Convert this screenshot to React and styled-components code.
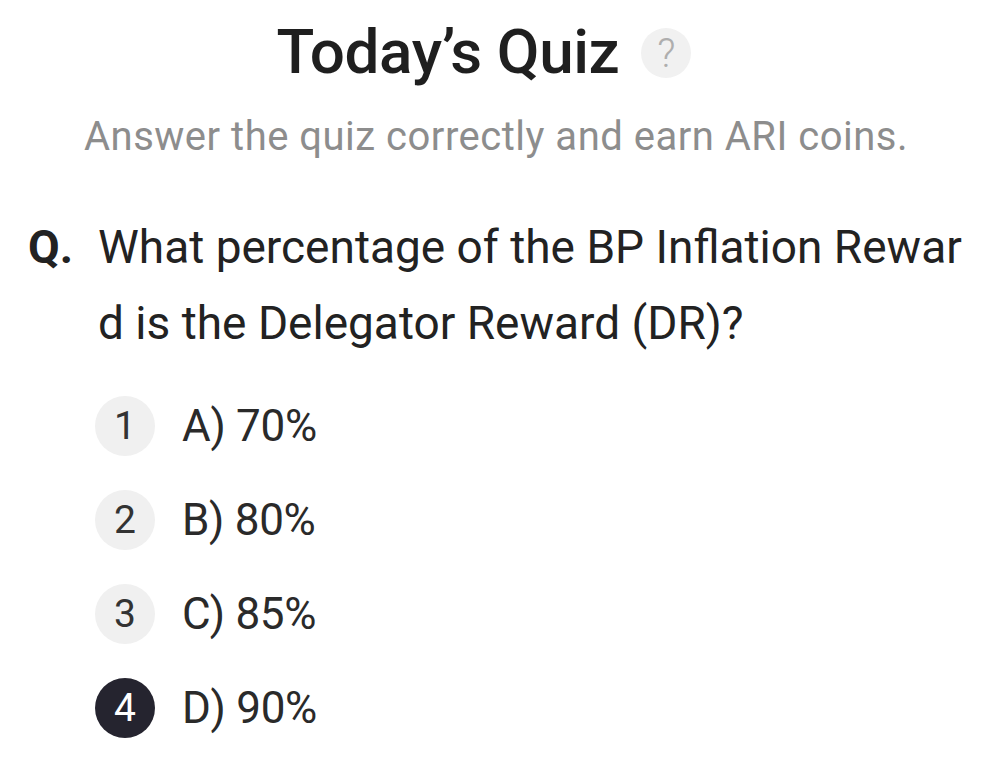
import React from "react";
import styled, { createGlobalStyle } from "styled-components";

const Global = createGlobalStyle`
  html, body { margin: 0; padding: 0; background: #ffffff; }
  body { font-family: Roboto, "Liberation Sans", sans-serif; color: #222; }
`;

const Page = styled.div`
  width: 992px;
  height: 778px;
  box-sizing: border-box;
  padding: 17px 28px 0 28px;
  display: flex;
  flex-direction: column;
`;

const Header = styled.div`
  display: flex;
  flex-direction: column;
  align-items: center;
`;

const TitleRow = styled.div`
  display: flex;
  align-items: center;
  gap: 22px;
  margin-left: -24px;
`;

const Title = styled.h1`
  margin: 0;
  font-size: 62px;
  font-weight: 500;
  line-height: 70px;
  color: #1f1f1f;
  letter-spacing: -0.4px;
`;

const HelpBadge = styled.span`
  width: 50px;
  height: 50px;
  border-radius: 50%;
  background: #f1f1f1;
  color: #aeaeae;
  font-size: 40px;
  font-weight: 300;
  display: flex;
  align-items: center;
  justify-content: center;
  margin-top: 2px;
`;

const Subtitle = styled.p`
  margin: 28px 0 0 0;
  font-size: 40px;
  line-height: 44px;
  color: #8d8d8d;
  letter-spacing: 0.5px;
`;

const Question = styled.div`
  margin-top: 50px;
  display: flex;
  align-items: flex-start;
`;

const QMark = styled.span`
  width: 70px;
  flex: none;
  font-size: 46px;
  font-weight: 700;
  line-height: 76px;
  color: #222;
`;

const QText = styled.p`
  margin: 0;
  font-size: 46px;
  line-height: 76px;
  color: #222;
`;

const Options = styled.ul`
  list-style: none;
  margin: 35px 0 0 67px;
  padding: 0;
  display: flex;
  flex-direction: column;
  gap: 35px;
`;

const Option = styled.li`
  display: flex;
  align-items: center;
  gap: 27px;
  height: 59px;
`;

const Num = styled.span`
  width: 60px;
  height: 60px;
  border-radius: 50%;
  flex: none;
  display: flex;
  align-items: center;
  justify-content: center;
  font-size: 39px;
  background: ${(p) => (p.$active ? "#25242f" : "#f0f0f0")};
  color: ${(p) => (p.$active ? "#ffffff" : "#333")};
`;

const Label = styled.span`
  font-size: 44px;
  color: #2a2a2a;
  letter-spacing: -0.3px;
`;

const options = [
  { n: 1, text: "A) 70%" },
  { n: 2, text: "B) 80%" },
  { n: 3, text: "C) 85%" },
  { n: 4, text: "D) 90%", active: true },
];

export default function App() {
  return (
    <>
      <Global />
      <Page>
        <Header>
          <TitleRow>
            <Title>Today’s Quiz</Title>
            <HelpBadge>?</HelpBadge>
          </TitleRow>
          <Subtitle>Answer the quiz correctly and earn ARI coins.</Subtitle>
        </Header>
        <Question>
          <QMark>Q.</QMark>
          <QText>
            What percentage of the BP Inflation Rewar
            <br />
            d is the Delegator Reward (DR)?
          </QText>
        </Question>
        <Options>
          {options.map((o) => (
            <Option key={o.n}>
              <Num $active={o.active}>{o.n}</Num>
              <Label>{o.text}</Label>
            </Option>
          ))}
        </Options>
      </Page>
    </>
  );
}
